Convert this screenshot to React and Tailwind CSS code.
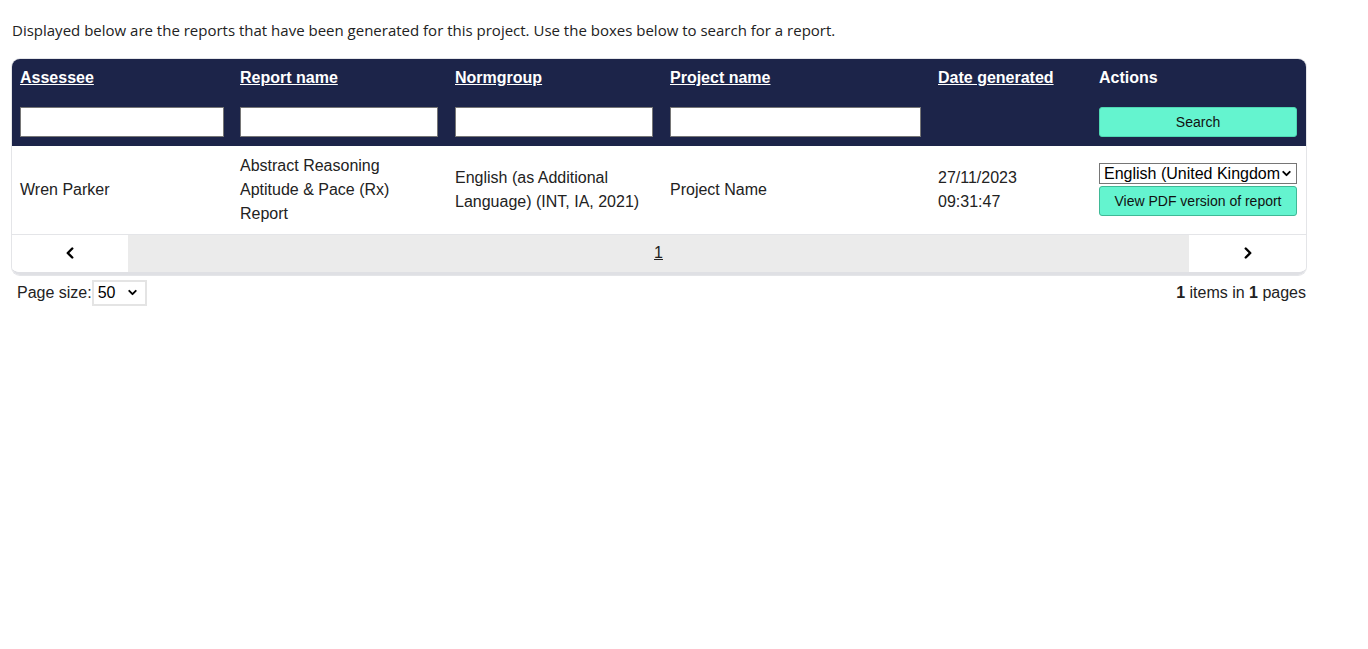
import { ChevronLeft, ChevronRight, ChevronDown } from 'lucide-react';

const row = {
  assessee: 'Wren Parker',
  report: 'Abstract Reasoning Aptitude & Pace (Rx) Report',
  normgroup: 'English (as Additional Language) (INT, IA, 2021)',
  project: 'Project Name',
};

const columns = [
  { label: 'Assessee', width: 'w-[220px]', input: 'w-[204px]' },
  { label: 'Report name', width: 'w-[215px]', input: 'w-[198px]' },
  { label: 'Normgroup', width: 'w-[215px]', input: 'w-[198px]' },
  { label: 'Project name', width: 'w-[268px]', input: 'w-[251px]' },
  { label: 'Date generated', width: 'w-[161px]', input: null },
];

export default function App() {
  return (
    <div className="min-h-[649px] bg-white px-3 pt-[20px] font-['Liberation_Sans',Arial,sans-serif] text-[#222]">
      <p className="font-['Open_Sans','Noto_Sans',sans-serif] text-[15px] leading-5 text-[#222]">
        Displayed below are the reports that have been generated for this project. Use the boxes below to search for a report.
      </p>

      <div className="mt-[19px] w-[1294px] overflow-hidden rounded-lg border-b-[3px] border-[#dfe0e4] shadow-[0_0_0_1px_#e4e5e8]">
        <table className="w-full table-fixed border-collapse text-[16px]">
          <thead className="bg-[#1c2449] text-white">
            <tr>
              {columns.map((c) => (
                <th key={c.label} className={`${c.width} h-[38px] px-2 text-left align-middle font-bold`}>
                  <a href="#" className="underline">{c.label}</a>
                </th>
              ))}
              <th className="h-[38px] px-2 text-left align-middle font-bold">Actions</th>
            </tr>
            <tr>
              {columns.map((c) => (
                <th key={c.label} className="h-[49px] px-2 pb-[9px] pt-[10px] text-left align-top">
                  {c.input && (
                    <input className={`${c.input} block h-[30px] border border-[#767676] bg-white px-1 text-black`} />
                  )}
                </th>
              ))}
              <th className="h-[49px] px-2 pb-[9px] pt-[10px] text-left align-top">
                <button className="block h-[30px] w-[198px] rounded-[3px] border border-[#4fd8b3] bg-[#64f4cf] text-[14px] font-normal text-[#111]">
                  Search
                </button>
              </th>
            </tr>
          </thead>
          <tbody>
            <tr className="h-[88px] border-b border-[#e4e5e8] text-[16px] leading-6 text-[#222]">
              <td className="px-2 align-middle">{row.assessee}</td>
              <td className="px-2 align-middle">{row.report}</td>
              <td className="px-2 align-middle">{row.normgroup}</td>
              <td className="px-2 align-middle">{row.project}</td>
              <td className="px-2 align-middle">
                27/11/2023
                <br />
                09:31:47
              </td>
              <td className="px-2 align-middle">
                <div className="flex flex-col gap-[2px]">
                  <div className="flex h-[21px] w-[198px] items-center border border-[#767676] bg-white pl-1 pr-[3px] text-black">
                    <span className="flex-1 overflow-hidden whitespace-nowrap leading-5">English (United Kingdom</span>
                    <ChevronDown size={13} strokeWidth={3.5} className="shrink-0" />
                  </div>
                  <button className="h-[30px] w-[198px] rounded-[3px] border border-[#3fb996] bg-[#64f4cf] text-[14px] text-[#111]">
                    View PDF version of report
                  </button>
                </div>
              </td>
            </tr>
          </tbody>
        </table>
        <div className="flex h-[37px] items-stretch text-[16px]">
          <div className="flex w-[116px] items-center justify-center bg-white">
            <ChevronLeft size={18} strokeWidth={3.25} className="text-black" />
          </div>
          <div className="flex flex-1 items-center justify-center bg-[#ebebeb]">
            <a href="#" className="underline text-[#222]">1</a>
          </div>
          <div className="flex w-[117px] items-center justify-center bg-white">
            <ChevronRight size={18} strokeWidth={3.25} className="text-black" />
          </div>
        </div>
      </div>

      <div className="mt-[5px] flex w-[1294px] items-center justify-between text-[16px] text-[#222]">
        <div className="flex items-center pl-[5px]">
          <span>Page size:</span>
          <div className="flex h-[26px] w-[55px] items-center border-2 border-[#e4e4e4] bg-white pl-[4px] pr-[6px] text-black">
            <span className="flex-1">50</span>
            <ChevronDown size={13} strokeWidth={3.5} />
          </div>
        </div>
        <div>
          <b>1</b> items in <b>1</b> pages
        </div>
      </div>
    </div>
  );
}
